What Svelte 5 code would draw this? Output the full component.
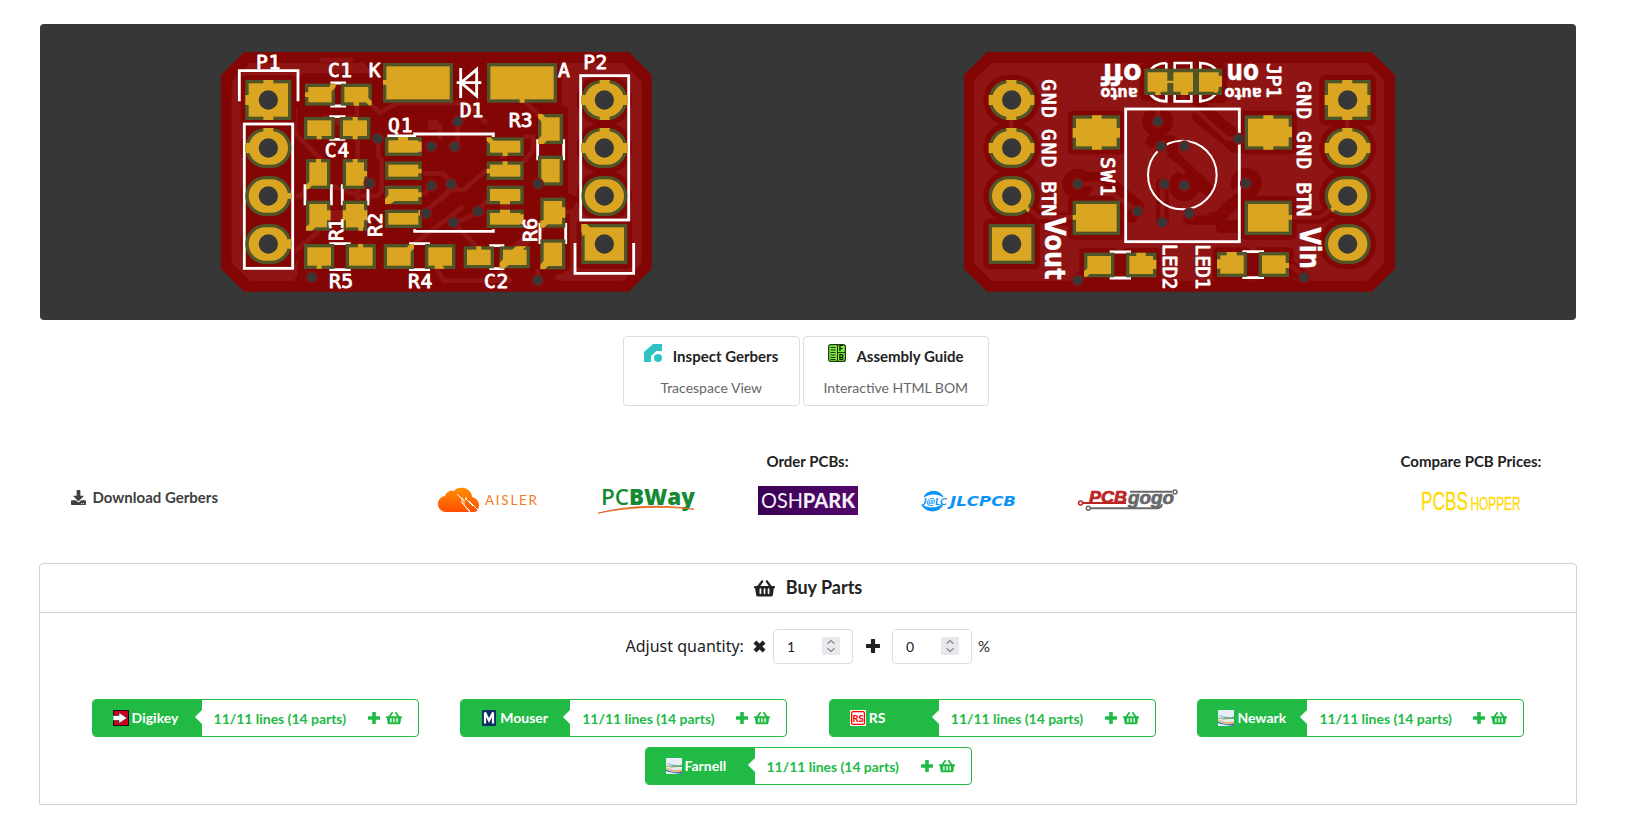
<script>
  // Board geometry is in board units; one screen pixel is three units.
  const frontPads = [
    [285,131,90,66],[393,131,92,66],[282,231,92,67],[389,231,92,67],
    [288,357,73,90],[398,357,74,90],[288,482,73,90],[398,482,74,90],
    [282,612,91,75],[407,612,91,75],[521,612,91,75],[645,612,91,75],
    [519,69,210,119],[831,69,210,119],
    [525,291,110,57],[525,364,110,56],[525,437,110,56],[525,509,110,55],
    [830,292,111,56],[830,364,111,56],[830,437,111,56],[830,509,111,55],
    [984,222,75,90],[984,347,75,90],[991,473,75,90],[991,598,75,90],
    [761,619,91,66],[869,619,91,66]
  ];
  const frontHeaders = [
    [106,120,0],[106,264,60],[106,408,60],[106,552,60],
    [1114,120,60],[1114,264,60],[1114,408,60],[1114,552,0]
  ];
  const frontTabs = [
    'M160 120h30v14h-30zM106 165h14v30h-14zM160 226h30v14h-30z',
    'M160 264h30v14h-30zM106 309h14v30h-14zM230 459h14v17h-14zM230 598h14v28h-14z',
    'M285 157h14v14h-14zM355 145L363 131H377V141L365 155zM431 183h16v14h-16zM468 168l17 15v13h-8l-14-14z',
    'M320 286h15v12h-15zM428 231h15v14h-15zM428 286h15v12h-15z',
    'M318 357h15v14h-15zM288 447V434L300 424V436H307L297 447zM428 357h15v14h-15zM458 393h13v16h-6l-6 10zM460 425h8v10h-8z',
    'M350 511h12v30h-12zM288 572V560L302 550 318 560 306 572zM398 511h14v30h-14zM455 511h17v30h-17zM445 558h14v14h-14z',
    'M320 674h15v12h-15zM444 612h15v14h-15zM588 626L600 612H612V625L600 638zM674 674h22l8 12h-30zM519 120h14v14h-14zM929 174h15v14h-15z',
    'M564 291h30v13h-30zM622 305h13v30h-13zM622 386h13v14h-13zM622 457h13v14h-13zM525 492V477L545 455 560 480 540 492zM625 511h6v16h-6z',
    'M830 292h12l16 18-12 8-16-16zM878 333h15v15h-15zM878 364h15v15h-15zM830 386h14v14h-14zM870 478h30v15h-30zM870 509h30v14h-30zM920 523h21v29h-21z',
    'M984 222h14l12 16-14 8-12-12zM984 312v-14l12-12 16 14-10 12zM984 437v-20h17v20zM1052 502h14v31h-14zM991 563v-20l16-5 7 14-12 11zM991 687v-13l14-16 13 16-13 13z',
    'M799 619h15v14h-15zM869 685v-16l18-21 18 20-20 17zM903 633l15-14h31l-17 16z',
    'M1169 120h30v14h-30zM1169 226h30v14h-30zM1114 165h16v30h-16zM1237 165h16v30h-16z',
    'M1169 264h30v14h-30zM1114 309h16v30h-16zM1237 309h16v30h-16zM1114 552h16l16 16h20l-50 20v-10l-2-4z'
  ];
  const frontVias = [[503,296],[664,320],[664,437],[648,520],[479,430],[305,712],[743,245],[734,320],[723,432],[804,514],[730,547],[984,432],[983,721]];
  const frontText = [
    ['P1',138,87,73],['C1',354,110,72],['K',476,112,36],['Q1',534,275,74],['C4',344,350,74],
    ['R5',357,745,72],['R4',594,745,73],['D1',749,232,71],['A',1044,111,36],['R3',896,261,72],
    ['P2',1120,88,72],['C2',822,743,73],['R1',399,603,68,-90],['R2',516,590,72,-90],['R6',981,606,72,-90]
  ];
  const backPads = [
    [353,226,142,103],[353,482,142,103],[869,226,142,103],[869,482,142,103],
    [387,638,91,74],[513,638,91,74],[786,636,90,75],[911,636,91,75]
  ];
  const backHeaders = [
    [101,120,60],[101,264,60],[101,408,60],[101,552,0],
    [1109,120,0],[1109,264,60],[1109,408,60],[1109,552,60]
  ];
  const backTabs = [
    'M154 120h30v14h-30zM154 226h30v14h-30zM101 165h14v30h-14zM224 165h14v30h-14z',
    'M154 264h30v14h-30zM101 309h14v30h-14zM224 309h14v30h-14zM206 500l10-4 9 12-6 10z',
    'M411 226h29v103h-29zM353 264h142v29h-142zM353 525h14v14h-14z',
    'M925 226h30v103h-30zM990 260h21v32h-21zM1000 525h11v14h-11z',
    'M1162 120h30v14h-30zM1162 226h30v14h-30zM1109 165h14v30h-14zM1232 165h14v30h-14z',
    'M1162 264h30v14h-30zM1109 309h14v30h-14zM1232 309h14v30h-14zM1126 505l12-10 8 10-14 12z',
    'M387 710V694L405 678 410 696 396 710zM544 638h28v14h-28zM590 659h14v28h-14zM815 636h30v14h-30zM786 658h14v28h-14zM990 669h12v15h-12z'
  ];
  const backVias = [[368,432],[548,514],[622,547],[628,432],[608,244],[618,319],[368,721],[688,319],[688,437],[703,520],[850,296],[873,430],[1047,712]];
  const backText = [
    ['GND',261,118,116],['GND',261,267,116],['BTN',261,424,104],['SW1',438,351,117],
    ['LED2',623,611,138],['LED1',724,612,136],['JP1',936,70,104],
    ['GND',1027,123,115],['GND',1027,273,115],['BTN',1027,427,102]
  ];

  const manufacturers = ['aisler', 'pcbway', 'oshpark', 'jlcpcb', 'pcbgogo'];
  const vendors = ['Digikey', 'Mouser', 'RS', 'Newark', 'Farnell'];
  let times = $state(1);
  let extra = $state(0);
</script>

{#snippet header(x, y, r)}
  <rect class="mask" {x} {y} width="138" height="120" rx={r} />
  <rect class="gold" x={x + 10} y={y + 10} width="118" height="100" rx={r ? 50 : 0} />
{/snippet}

{#snippet pad(p)}
  <rect class="mask" x={p[0]} y={p[1]} width={p[2]} height={p[3]} />
  <rect class="gold" x={p[0] + 10} y={p[1] + 10} width={p[2] - 20} height={p[3] - 20} />
{/snippet}

{#snippet basket(w)}
  <svg class="basket" width={w} height={w * 0.889} viewBox="0 0 576 512" fill="currentColor">
    <path d="M576 216v16c0 13.255-10.745 24-24 24h-8l-26.113 182.788C514.509 462.435 494.257 480 470.37 480H105.63c-23.887 0-44.139-17.565-47.518-41.212L32 256h-8c-13.255 0-24-10.745-24-24v-16c0-13.255 10.745-24 24-24h67.341l106.78-146.821c10.395-14.292 30.407-17.453 44.701-7.058 14.293 10.395 17.453 30.408 7.058 44.701L170.477 192h235.046L326.12 82.821c-10.395-14.292-7.234-34.306 7.059-44.701 14.291-10.395 34.306-7.235 44.701 7.058L484.659 192H552c13.255 0 24 10.745 24 24zM312 392V280c0-13.255-10.745-24-24-24s-24 10.745-24 24v112c0 13.255 10.745 24 24 24s24-10.745 24-24zm112 0V280c0-13.255-10.745-24-24-24s-24 10.745-24 24v112c0 13.255 10.745 24 24 24s24-10.745 24-24zm-224 0V280c0-13.255-10.745-24-24-24s-24 10.745-24 24v112c0 13.255 10.745 24 24 24s24-10.745 24-24z" />
  </svg>
{/snippet}

{#snippet plus(s)}
  <svg width={s} height={s} viewBox="0 0 14 14" fill="currentColor"><path d="M5.6 0h2.8q.7 0 .7.7v4.2h4.2q.7 0 .7.7v2.8q0 .7-.7.7H9.1v4.2q0 .7-.7.7H5.6q-.7 0-.7-.7V9.100H.7q-.7 0-.7-.7V5.600q0-.7.7-.7h4.200V.7q0-.7.7-.7z" /></svg>
{/snippet}

{#snippet spinner()}
  <svg class="spin" width="18" height="18" viewBox="0 0 18 18"><rect width="18" height="18" fill="#e9e9ed" /><path d="M5.500 6.800L9 3.500l3.500 3.300M5.500 11.200L9 14.500l3.500-3.300" fill="none" stroke="#8f8f9d" stroke-width="1.400" /></svg>
{/snippet}

{#snippet logo(name)}
  <svg class="logo" width="100" height="29" viewBox="0 0 100 29">
    {#if name === 'aisler'}
      <defs><linearGradient id="flame" x1="0" y1="0" x2="0" y2="1"><stop offset="0" stop-color="#ff9000" /><stop offset="1" stop-color="#ff4e00" /></linearGradient></defs>
      <path fill="url(#flame)" d="M8 26C3 26 0 22 0 18c0-5 4-8 7-8 1-4 5-6 9-5 2-3 6-4 10-3 5 1 8 5 8 9 4 1 7 4 7 8s-2 7-5 7z" />
      <path d="M19 8l5 5v4l8 8M21 10l5 4v5l6 7M28 14v-3M27 12l8 8M31 15l9 9" fill="none" stroke="#fff" stroke-width="1" />
      <text x="47" y="19" font-size="13.500" textLength="52" fill="#f47a20">AISLER</text>
    {:else if name === 'pcbway'}
      <text class="way" x="3" y="18.800" font-size="22" textLength="94" lengthAdjust="spacingAndGlyphs" fill="#158a35"><tspan font-weight="600">PC</tspan><tspan font-weight="800">BWay</tspan></text>
      <path d="M0 27.200C26 20 62 17.800 96 23.200 62 19.800 30 21 0 27.200z" fill="#e3641b" stroke="#e3641b" stroke-width=".8" />
    {:else if name === 'oshpark'}
      <defs><linearGradient id="plum"><stop offset="0" stop-color="#3b0053" /><stop offset="1" stop-color="#52086b" /></linearGradient></defs>
      <rect width="100" height="29" fill="url(#plum)" />
      <text x="3" y="22.300" font-size="20.500" textLength="94" lengthAdjust="spacingAndGlyphs" fill="#f4eef7">OSH<tspan font-weight="900">PARK</tspan></text>
    {:else if name === 'jlcpcb'}
      <path d="M6 11C9 4 21 3 25 11 20 7 12 7 6 11zM4 19c6 4 15 4 21-1-3 9-17 9-21 1z" fill="#0b93f6" stroke="#0b93f6" />
      <text x="4" y="18.500" font-size="8.500" font-weight="700" font-style="italic" textLength="25" lengthAdjust="spacingAndGlyphs" fill="#0b93f6">J@LC</text>
      <text class="wide" x="32" y="20" font-size="14.500" textLength="66" lengthAdjust="spacingAndGlyphs" fill="#0b93f6">JLCPCB</text>
    {:else if name === 'pcbgogo'}
      <g fill="none" stroke-width="2"><path d="M5 17H48" stroke="#bd2424" /><circle cx="2.600" cy="17" r="2" stroke="#bd2424" stroke-width="1.500" />
      <g stroke="#66686a"><path d="M12.500 22.300H79q4 0 5-4M52 5.700H94" /><circle cx="10.300" cy="22.300" r="2" stroke-width="1.500" /><circle cx="97" cy="6" r="2" stroke-width="1.500" /></g></g>
      <text class="heavy red" x="11" y="17" font-size="17" textLength="38" lengthAdjust="spacingAndGlyphs">PCB</text>
      <text class="heavy grey" x="50" y="17.800" font-size="18" textLength="46" lengthAdjust="spacingAndGlyphs">gogo</text>
    {:else}
      <g class="shopper"><text x="0" y="24" font-size="25.500" textLength="47" lengthAdjust="spacingAndGlyphs">PCBS</text><text x="49.500" y="24" font-size="17.500" textLength="50" lengthAdjust="spacingAndGlyphs">HOPPER</text></g>
    {/if}
  </svg>
{/snippet}

{#snippet favicon(name)}
  <svg width="16" height="16" viewBox="0 0 16 16">
    {#if name === 'Digikey'}
      <rect x=".5" y=".5" width="15" height="15" fill="#d0021b" stroke="#111" /><path d="M0 5.500h6V2.500L14 8l-8 5.500V10.500H0z" fill="#fff" stroke="#222" stroke-width=".6" />
    {:else if name === 'Mouser'}
      <rect x="1" width="14" height="16" rx="1" fill="#0c2f63" /><path d="M4 13.500v-11l4 8 4-8v11" fill="none" stroke="#fff" stroke-width="2.200" />
    {:else if name === 'RS'}
      <rect width="16" height="16" fill="#fff" /><rect x="1.600" y="1.600" width="12.800" height="12.800" rx="1.500" fill="none" stroke="#f00" stroke-width="1.300" /><text x="2.600" y="11.500" font-size="9.500" font-weight="900" textLength="11" lengthAdjust="spacingAndGlyphs" fill="#f00">RS</text>
    {:else}
      <rect width="16" height="16" fill="#e4eef4" /><path d="M0 5q7 3 16 2v2Q6 9 0 5z" fill="#4d9fc2" /><path d="M0 8q8 2 16-1" fill="none" stroke="#8fae62" stroke-width="1.200" /><path d="M0 10q8 4 16 2v1.500Q6 14 0 10z" fill="#f29a37" stroke="#f29a37" stroke-width=".5" /><path d="M0 11.500q8 4 16 2V16Q6 15 0 13z" fill="#3a6fae" />
    {/if}
  </svg>
{/snippet}

<main>
  <section class="boards">
    <svg width="1536" height="296" viewBox="40 24 1536 296">
      <g transform="translate(210 40) scale(.333333)">
        <path class="base" d="M103 36H1256L1325 105V686L1256 755H103L33 686V105z" />
        <path class="copper" d="M65 125L120 69H460L475 85H500V100H280L258 125V240L100 252V685L248 685 262 655V708L250 722H120L65 668z" />
        <path class="copper" d="M1072 69H1240L1295 125V668L1240 722H1040L1033 708 1080 690V515L1108 475 1075 460V205L1055 195V80z" />
        <g class="trace">
          <path d="M440 190V235M478 190L510 218 560 190H770L830 250M255 200V280L350 375M245 468H270L290 445M330 60H430M330 572L245 640M443 300V480M505 300V350L515 360V455L500 468H450L360 435M612 612L760 500M640 400H700L723 432M640 465L664 437M640 520L720 450H760L830 390M690 480L740 435M730 547L760 540 804 514M804 514L830 480M730 547L800 620M870 350H890M940 290H970V330L940 365M660 650L700 722H900L870 690M983 721V687M690 250V300M945 120V185L990 230M1065 515H1090L1125 555M743 245V315" />
          <path class="broad" d="M360 526H400M580 300V290M885 478V522M335 240H435M670 240V270M905 640L1000 550" />
        </g>
        {#each frontHeaders as h}<rect class="gap" x={h[0] - 14} y={h[1] - 14} width="166" height="148" rx={h[2] + 12} />{/each}
        <g class="silk"><path d="M88 184V92H264V184M285 433V496M364 433V496M397 433V496M474 433V496M361 129H408M361 198H408M358 230H406M358 298H406M358 611H422M358 689H422M597 611H660M597 689H660M532 288H614V282H850V291M614 568V574H850V568M838 617H883M838 686H883M983 298V361M1061 298V361M990 549V612M1067 549V612M1095 609V700H1271V609M740 128H814M752 84V174M800 88V168L753 128z" /><rect x="103" y="252" width="145" height="433" /><rect x="1112" y="107" width="144" height="433" /></g>
        {#each frontPads as p}{@render pad(p)}{/each}
        {#each frontHeaders as h}{@render header(h[0], h[1], h[2])}{/each}
        {#each frontTabs as d}<path class="gold" {d} />{/each}
        {#each frontHeaders as h}<circle class="hole" cx={h[0] + 69} cy={h[1] + 60} r="29" />{/each}
        {#each frontVias as v}<circle class="via" cx={v[0]} cy={v[1]} r="16.500" />{/each}
        <g class="legend">{#each frontText as t}<text transform="translate({t[1]} {t[2]}) rotate({t[4] ?? 0})" textLength={t[3]}>{t[0]}</text>{/each}</g>
      </g>
      <g transform="translate(955 40) scale(.333333)">
        <path class="base" d="M97 36H1250L1320 105V686L1250 755H97L27 686V105z" />
        <path class="copper" d="M110 69H1237L1287 120V670L1237 722H110L57 670V120z" />
        <g class="clear"><path d="M368 432Q400 400 460 425L548 500 530 530M608 244V220M590 305H650V345L760 450M622 547V432M688 437V460M703 535H790L870 450M730 230L780 270 840 320M850 296L700 170M600 170H800M387 710L368 721M1000 675L1047 712M225 510Q260 545 355 535M1000 532H1100L1140 505M800 560H870" /><path class="wide-clear" d="M368 432h1M608 244h1M688 437h1M873 430h1" /></g>
        {#each backHeaders as h}<rect class="gap" x={h[0] - 16} y={h[1] - 16} width="170" height="152" rx={h[2] + 16} />{/each}
        {#each backPads as p}<rect class="gap" x={p[0] - 14} y={p[1] - 14} width={p[2] + 28} height={p[3] + 28} rx="14" />{/each}
        <rect class="gap" x="553" y="70" width="264" height="112" rx="18" />
        <path class="gap" d="M465 640H530V712H465zM865 640H925V712H865z" />
        <g class="trace"><path d="M368 432H430L548 514M622 547V432M608 244V150M703 520H750L873 430M850 296H815L680 170M630 319V350L688 400M225 510L250 532H355M1011 532H1095L1130 505M1000 680H1015L1047 712M169 240V264M1177 240V264" /></g>
        <g class="silk"><rect x="512" y="207" width="341" height="398" /><circle cx="682" cy="405" r="103" stroke-width="6" /><path d="M464 636H528M464 714H528M862 635H927M862 713H927" /><path stroke-width="8" d="M634 69C605 69 588 85 580 100V150C590 176 610 184 634 184V69M659 69H709V184H659zM736 69C765 70 780 80 790 100V150C780 170 765 182 736 184z" /></g>
        <rect class="mask" x="568" y="86" width="233" height="79" />
        <path class="gold" d="M578 97H637V122H655V97H714V155H700V165H677V155H655V129H637V155H617V165H601V155H578zM732 97H791V108H801V140H791V150L787 158H779L776 155H732z" />
        {#each backPads as p}{@render pad(p)}{/each}
        {#each backHeaders as h}{@render header(h[0], h[1], h[2])}{/each}
        {#each backTabs as d}<path class="gold" {d} />{/each}
        {#each backHeaders as h}<circle class="hole" cx={h[0] + 69} cy={h[1] + 60} r="29" />{/each}
        {#each backVias as v}<circle class="via" cx={v[0]} cy={v[1]} r="16.500" />{/each}
        <g class="legend">{#each backText as t}<text transform="translate({t[1]} {t[2]}) rotate(90)" textLength={t[3]}>{t[0]}</text>{/each}</g>
        <g class="legend strong">
          <text transform="translate(270 532) rotate(90)" font-size="84" textLength="187" lengthAdjust="spacingAndGlyphs">Vout</text>
          <text transform="translate(1036 562) rotate(90)" font-size="84" textLength="125" lengthAdjust="spacingAndGlyphs">Vin</text>
          <text transform="translate(560 71) rotate(180)" font-size="84" textLength="122" lengthAdjust="spacingAndGlyphs">off</text>
          <text transform="translate(912 71) rotate(180)" font-size="84" textLength="98" lengthAdjust="spacingAndGlyphs">on</text>
          <text transform="translate(548 144) rotate(180)" font-size="48" textLength="112" lengthAdjust="spacingAndGlyphs">auto</text>
          <text transform="translate(920 144) rotate(180)" font-size="48" textLength="112" lengthAdjust="spacingAndGlyphs">auto</text>
        </g>
      </g>
    </svg>
  </section>

  <nav class="tools">
    <button class="tool inspect">
      <span class="head"><svg width="18" height="18" viewBox="0 0 18 18" fill="#2fc3c6"><path d="M9 0h9v7h-5.500L7 12v6H0V8z" /><circle cx="14" cy="14" r="4" /></svg><b>Inspect Gerbers</b></span>
      <span class="sub">Tracespace View</span>
    </button>
    <button class="tool guide">
      <span class="head"><svg width="18" height="18" viewBox="0 0 18 18"><rect x=".6" y=".6" width="16.800" height="16.800" rx="2" fill="#7fe83c" stroke="#1c3a12" stroke-width="1.200" /><path d="M9.500 1v16M9.500 8.500H17M2.500 3.500h5M2.500 6h5M2.500 8.500h5M2.500 11h5M2.500 13.500h5M2.500 15.500h5" stroke="#1c3a12" /><text x="10.800" y="7.300" font-size="7.500" font-weight="900">F</text><text x="10.800" y="15.800" font-size="7.500" font-weight="900">B</text></svg><b>Assembly Guide</b></span>
      <span class="sub">Interactive HTML BOM</span>
    </button>
  </nav>

  <section class="order">
    <div class="download"><svg width="15" height="15" viewBox="0 0 512 512" fill="currentColor"><path d="M216 0h80c13.300 0 24 10.700 24 24v168h87.700c17.800 0 26.700 21.500 14.100 34.100L269.700 378.300c-7.500 7.500-19.800 7.500-27.300 0L90.100 226.100c-12.600-12.600-3.700-34.100 14.100-34.100H192V24c0-13.300 10.700-24 24-24zm296 376v112c0 13.300-10.700 24-24 24H24c-13.300 0-24-10.700-24-24V376c0-13.300 10.700-24 24-24h146.700l49 49c20.100 20.100 52.500 20.100 72.600 0l49-49H488c13.300 0 24 10.700 24 24zm-124 88c0-11-9-20-20-20s-20 9-20 20 9 20 20 20 20-9 20-20zm64 0c0-11-9-20-20-20s-20 9-20 20 9 20 20 20 20-9 20-20z" /></svg><b>Download Gerbers</b></div>
    <div class="makers">
      <h3>Order PCBs:</h3>
      <div class="logos">{#each manufacturers as m}<a href="#{m}">{@render logo(m)}</a>{/each}</div>
    </div>
    <div class="compare">
      <h3>Compare PCB Prices:</h3>
      {@render logo('pcbshopper')}
    </div>
  </section>

  <section class="buy">
    <h2>{@render basket(21)}<span>Buy Parts</span></h2>
    <div class="adjust">
      <span class="label">Adjust quantity:</span>
      <svg class="times" width="13" height="13" viewBox="0 0 12 12"><path d="M1.800 1.800l8.400 8.400M10.200 1.800l-8.400 8.400" stroke="#222" stroke-width="3.800" /></svg>
      <label class="field"><input bind:value={times} />{@render spinner()}</label>
      <span class="add">{@render plus(14)}</span>
      <label class="field"><input bind:value={extra} />{@render spinner()}</label>
      <span class="percent">%</span>
    </div>
    <div class="vendors">
      {#each vendors as v}
        <button class="vendor">
          <span class="name">{@render favicon(v)}<b>{v}</b></span>
          <span class="lines">11/11 lines (14 parts)</span>
          <span class="cart">{@render plus(12)}{@render basket(16)}</span>
        </button>
      {/each}
    </div>
  </section>
</main>

<style>
  :global(body) { background: #fff; }
  main { box-sizing: border-box; width: 1629px; height: 820px; padding: 24px 52px 0 40px; overflow: hidden; font-family: Lato, sans-serif; color: #222; }
  svg { display: block; flex: none; }
  .boards { width: 1536px; height: 296px; background: #373737; border-radius: 4px; overflow: hidden; }
  .base, .gap { fill: #840604; }
  .copper { fill: #8f1515; }
  .trace { fill: none; stroke: #8f1515; stroke-width: 14; stroke-linejoin: round; }
  .broad { stroke-width: 30; }
  .clear { fill: none; stroke: #840604; stroke-width: 38; stroke-linejoin: round; stroke-linecap: round; }
  .wide-clear { stroke-width: 92; }
  .mask { fill: #4f5529; }
  .gold { fill: #daa520; }
  .hole { fill: #373737; }
  .via { fill: #373737; stroke: #8a1414; stroke-width: 4; }
  .silk { fill: none; stroke: #fff; stroke-width: 8.500; }
  .legend { fill: #fff; stroke: #fff; stroke-width: 2.600; stroke-linejoin: round; font-family: "DejaVu Sans Mono", monospace; font-size: 59px; }
  .strong { font-family: "DejaVu Sans", sans-serif; font-weight: 700; stroke-width: 1; }
  button { font: inherit; margin: 0; background: #fff; }
  .tools { display: flex; gap: 3.500px; margin-top: 16px; padding-left: 583px; }
  .tool { box-sizing: border-box; height: 70px; padding: 7px 0 0; border: 1px solid #dcdddd; border-radius: 4px; display: flex; flex-direction: column; align-items: center; }
  .inspect { width: 176.500px; }
  .guide { width: 185.500px; }
  .head { display: flex; gap: 10.500px; height: 20px; color: #222; }
  .head b { font-size: 15px; line-height: 20px; padding-top: 1.500px; }
  .sub { font-size: 14px; line-height: 20px; margin-top: 14px; color: #666; }
  h3 { margin: 0; font-size: 15px; line-height: 20px; font-weight: 700; }
  .order { display: flex; height: 157px; padding-top: 45px; box-sizing: border-box; }
  .download { width: 368px; box-sizing: border-box; padding: 36px 0 0 31px; display: flex; gap: 6.500px; height: 60px; color: #404040; font-size: 15px; line-height: 20px; }
  .download svg { margin-top: 3px; }
  .makers { width: 800px; text-align: center; }
  .makers h3 { padding-right: 1px; }
  .logos { display: flex; margin-top: 15px; }
  .logos a { width: 160px; display: flex; justify-content: center; }
  .compare { width: 324px; flex: none; padding-left: 202px; box-sizing: border-box; display: flex; flex-direction: column; align-items: center; }
  .compare h3 { white-space: nowrap; }
  .compare .logo { margin-top: 15px; }
  .logo { overflow: visible; }
  .way { font-family: "Open Sans", sans-serif; }
  .wide { font-family: "DejaVu Sans", sans-serif; font-weight: 700; font-style: italic; }
  .heavy { font-family: "Liberation Sans", sans-serif; font-weight: 700; font-style: italic; stroke-width: .7; }
  .red { fill: #bd2424; stroke: #bd2424; }
  .grey { fill: #66686a; stroke: #66686a; }
  .shopper { fill: #ffd90a; stroke: #ffd90a; stroke-width: .3; font-family: "Liberation Sans", sans-serif; }
  .buy { box-sizing: border-box; width: 1538px; height: 242px; margin-left: -1px; border: 1px solid #d4d4d5; border-radius: 4px 4px 0 0; }
  h2 { box-sizing: border-box; height: 49px; margin: 0; border-bottom: 1px solid #d4d4d5; font-size: 18px; line-height: 24px; display: flex; align-items: center; justify-content: center; gap: 11px; }
  h2 span { padding-bottom: 2px; }
  h2 :global(svg) { margin-top: 1px; }
  .adjust { display: flex; align-items: center; height: 36px; margin-top: 15px; padding-left: 585.500px; }
  .label { font: 16px "Noto Sans", sans-serif; width: 127px; }
  .times { margin-right: 7.500px; }
  .field { box-sizing: border-box; width: 80px; height: 35px; border: 1px solid #dcdddd; border-radius: 4px; display: flex; align-items: center; padding-left: 13px; }
  input { border: 0; outline: 0; padding: 0; width: 35px; font: 14px Lato, sans-serif; color: #222; }
  .add { width: 39px; display: flex; justify-content: center; }
  .percent { font-size: 15px; margin-left: 6px; }
  .vendors { display: flex; flex-wrap: wrap; justify-content: center; gap: 10px 41.600px; padding: 35px 40px 0; }
  .vendor { box-sizing: border-box; width: 327px; height: 38px; padding: 0; border: 1px solid #21ba45; border-radius: 4px; color: #21ba45; display: flex; align-items: center; overflow: hidden; }
  .name { position: relative; box-sizing: border-box; width: 109px; height: 38px; background: #21ba45; color: #fff; display: flex; align-items: center; gap: 3px; padding: 0 0 1px 20px; font-size: 14px; }
  .name::after { content: ''; position: absolute; right: -5px; top: 13px; width: 10px; height: 10px; background: #fff; transform: rotate(45deg); }
  .lines { font-size: 14px; font-weight: 700; width: 166px; text-align: left; padding-left: 12px; box-sizing: border-box; letter-spacing: -.03px; }
  .cart { display: flex; align-items: center; gap: 6px; }
</style>
